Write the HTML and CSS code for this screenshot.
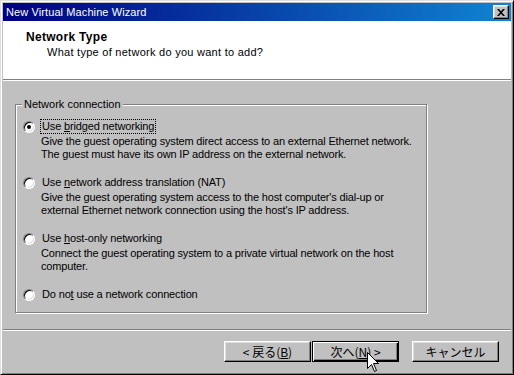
FILE: index.html
```html
<!DOCTYPE html>
<html>
<head>
<meta charset="utf-8">
<link rel="stylesheet" href="styles.css">
</head>
<body>
<div class="window">
  <div class="titlebar">
    <span class="title">New Virtual Machine Wizard</span>
    <span class="close"><svg width="8" height="7" viewBox="0 0 8 7"><path d="M0 0h2l2 2.2L6 0h2L5 3.5 8 7H6L4 4.8 2 7H0l3-3.5z" fill="#000"/></svg></span>
  </div>
  <div class="header">
    <div class="h-title">Network Type</div>
    <div class="h-sub">What type of network do you want to add?</div>
  </div>
  <div class="sep"></div>
  <div class="content">
    <fieldset class="group">
      <legend>Network connection</legend>
      <div class="option">
        <div class="opt-row"><span class="radio checked"></span><span class="label focus">Use <u>b</u>ridged networking</span></div>
        <div class="desc">Give the guest operating system direct access to an external Ethernet network.<br>The guest must have its own IP address on the external network.</div>
      </div>
      <div class="option">
        <div class="opt-row"><span class="radio"></span><span class="label">Use <u>n</u>etwork address translation (NAT)</span></div>
        <div class="desc">Give the guest operating system access to the host computer's dial-up or<br>external Ethernet network connection using the host's IP address.</div>
      </div>
      <div class="option">
        <div class="opt-row"><span class="radio"></span><span class="label">Use <u>h</u>ost-only networking</span></div>
        <div class="desc">Connect the guest operating system to a private virtual network on the host<br>computer.</div>
      </div>
      <div class="option">
        <div class="opt-row"><span class="radio"></span><span class="label">Do no<u>t</u> use a network connection</span></div>
      </div>
    </fieldset>
  </div>
  <div class="sep"></div>
  <div class="buttons">
    <span class="btn">&lt; 戻る(<u>B</u>)</span>
    <span class="btn default">次へ(<u>N</u>) &gt;</span>
    <span class="btn cancel">キャンセル</span>
  </div>
  <svg class="cursor" width="13" height="21" viewBox="0 0 13 21"><path d="M0.5 0.5V16.5L4.5 12.5L7.5 19.5L9.5 18.5L6.5 11.5H11.5Z" fill="#fff" stroke="#000" stroke-width="1"/></svg>
</div>
</body>
</html>
```
FILE: styles.css
```css
html, body {
  margin: 0;
  padding: 0;
  background: #c0c0c0;
}
.window {
  position: relative;
  width: 514px;
  height: 375px;
  box-sizing: border-box;
  background: #c0c0c0;
  border: 1px solid;
  border-color: #dfdfdf #000 #000 #dfdfdf;
  box-shadow: inset 1px 1px 0 #fff, inset -1px -1px 0 #808080;
  padding: 2px;
  font-family: "Liberation Sans", Arial, sans-serif;
  font-size: 11px;
  line-height: 13px;
  color: #000;
  overflow: hidden;
}
.titlebar {
  height: 18px;
  display: flex;
  align-items: center;
  justify-content: space-between;
  background: linear-gradient(to right, #000080, #1084d0);
  padding: 0 2px 0 3px;
}
.title {
  color: #fff;
  font-size: 11px;
  letter-spacing: 0.1px;
}
.close {
  width: 16px;
  height: 14px;
  box-sizing: border-box;
  background: #c0c0c0;
  border: 1px solid;
  border-color: #fff #000 #000 #fff;
  box-shadow: inset -1px -1px 0 #808080, inset 1px 1px 0 #dfdfdf;
  display: flex;
  align-items: center;
  justify-content: center;
}
.header {
  height: 58px;
  box-sizing: border-box;
  background: #fff;
  padding: 10px 0 0 23px;
}
.h-title {
  font-weight: bold;
  font-size: 12px;
  letter-spacing: 0.3px;
}
.h-sub {
  margin-top: 2px;
  padding-left: 21px;
  letter-spacing: 0.27px;
}
.sep {
  height: 0;
  border-top: 1px solid #808080;
  border-bottom: 1px solid #fff;
}
.content {
  height: 248px;
  box-sizing: border-box;
  padding: 17px 0 0 12px;
}
.group {
  width: 412px;
  box-sizing: border-box;
  margin: 0;
  padding: 8px 0 10px 7px;
  min-width: 0;
  border: 1px solid #808080;
  box-shadow: 1px 1px 0 #fff, inset 1px 1px 0 #fff;
}
.group legend {
  padding: 0 2px;
  margin-left: -1px;
  background: #c0c0c0;
  line-height: 13px;
}
.option {
  margin-bottom: 14px;
}
.option:last-child {
  margin-bottom: 0;
}
.opt-row {
  display: flex;
  align-items: center;
  height: 15px;
}
.radio {
  position: relative;
  width: 12px;
  height: 12px;
  box-sizing: border-box;
  border-radius: 50%;
  background: #fff;
  border: 1px solid;
  border-color: #808080 #fff #fff #808080;
  box-shadow: inset 1px 1px 0 #000, inset -1px -1px 0 #dfdfdf;
  flex: none;
}
.radio.checked::after {
  content: "";
  position: absolute;
  left: 3px;
  top: 3px;
  width: 4px;
  height: 4px;
  border-radius: 50%;
  background: #000;
}
.label {
  margin-left: 5px;
  padding: 0 1px;
  line-height: 13px;
  border: 1px solid transparent;
  letter-spacing: -0.15px;
}
.label.focus {
  border: 1px dotted #000;
}
.desc {
  margin-left: 18px;
  margin-top: 1px;
  letter-spacing: -0.17px;
}
.buttons {
  display: flex;
  justify-content: flex-end;
  padding: 10px 12px 0 0;
}
.btn {
  width: 87px;
  height: 21px;
  box-sizing: border-box;
  display: flex;
  align-items: center;
  justify-content: center;
  background: #c0c0c0;
  border: 1px solid;
  border-color: #fff #000 #000 #fff;
  box-shadow: inset -1px -1px 0 #808080, inset 1px 1px 0 #dfdfdf;
  font-family: "Noto Sans CJK JP", "Liberation Sans", sans-serif;
  font-size: 12px;
  line-height: 14px;
}
.btn.default {
  margin-left: 1px;
  border: 1px solid #000;
  box-shadow: inset 1px 1px 0 #fff, inset -1px -1px 0 #000, inset -2px -2px 0 #808080;
}
.btn.cancel {
  margin-left: 13px;
}
.cursor {
  position: absolute;
  left: 366px;
  top: 351px;
}
```
